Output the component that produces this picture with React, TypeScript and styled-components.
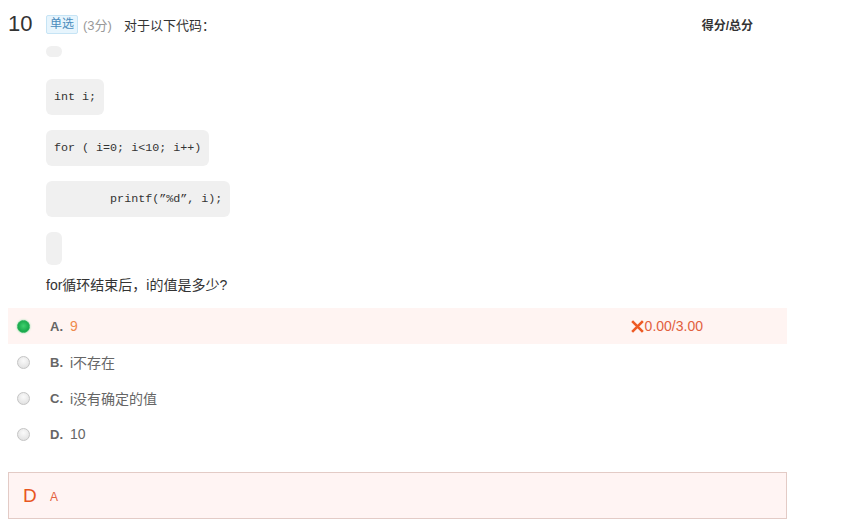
import React from "react"
import styled, { createGlobalStyle } from "styled-components"

const Global = createGlobalStyle`
  body {
    margin: 0;
    background: #fff;
    font-family: "Liberation Sans", "Noto Sans CJK SC", sans-serif;
    color: #333;
  }
`

const codeLines = ["", "int i;", "for ( i=0; i<10; i++)", "        printf(\u201d%d\u201d, i);", ""]

const options = [
  { key: "A", text: "9", picked: true },
  { key: "B", text: "i不存在", picked: false },
  { key: "C", text: "i没有确定的值", picked: false },
  { key: "D", text: "10", picked: false },
]

const App = () => (
  <Page>
    <Global />
    <Header>
      <Num>10</Num>
      <Tag>单选</Tag>
      <Points>(3分)</Points>
      <Title>对于以下代码：</Title>
      <ScoreHead>得分/总分</ScoreHead>
    </Header>
    <Body>
      <Code>
        {codeLines.map((line, i) => (
          <CodeLine key={i} $first={i === 0} $empty={line === ""}>
            {line}
          </CodeLine>
        ))}
      </Code>
      <Question>for循环结束后，i的值是多少?</Question>
    </Body>
    <Options>
      {options.map((o) => (
        <Option key={o.key} $picked={o.picked}>
          <Radio $on={o.picked} />
          <Letter>{o.key}.</Letter>
          <OptText $picked={o.picked}>{o.text}</OptText>
          {o.picked && (
            <Result>
              <Cross viewBox="0 0 14 14">
                <path d="M2 2 L12 12 M12 2 L2 12" />
              </Cross>
              0.00/3.00
            </Result>
          )}
        </Option>
      ))}
    </Options>
    <Answer>
      <AnswerMark>D</AnswerMark>
      <AnswerText>A</AnswerText>
    </Answer>
  </Page>
)

const Page = styled.div`
  width: 841px;
  padding-top: 12px;
`

const Header = styled.div`
  display: flex;
  align-items: center;
  height: 24px;
  padding-left: 8px;
  width: 745px;
`

const Num = styled.span`
  font-size: 22px;
  color: #333;
  width: 38px;
`

const Tag = styled.span`
  font-size: 12px;
  line-height: 17px;
  padding: 0 3px;
  background: #e7f5fd;
  border: 1px solid #c6e4f5;
  color: #4a8cbc;
  border-radius: 2px;
`

const Points = styled.span`
  font-size: 13px;
  color: #999;
  margin-left: 5px;
`

const Title = styled.span`
  font-size: 13px;
  color: #333;
  margin-left: 12px;
`

const ScoreHead = styled.span`
  margin-left: auto;
  font-size: 12px;
  font-weight: bold;
  color: #333;
`

const Body = styled.div`
  padding-left: 46px;
`

const Code = styled.div`
  display: flex;
  flex-direction: column;
  align-items: flex-start;
  gap: 15px;
`

const CodeLine = styled.pre<{ $first: boolean; $empty: boolean }>`
  margin: ${(p) => (p.$first ? "10px 0 7px" : "0")};
  background: #f0f0f0;
  border-radius: 6px;
  font-family: "Liberation Mono", monospace;
  font-size: 11.7px;
  color: #333;
  line-height: 36px;
  height: ${(p) => (p.$first ? "11px" : p.$empty ? "33px" : "36px")};
  min-width: 16px;
  padding: 0 ${(p) => (p.$empty ? "0" : "8px")};
`

const Question = styled.div`
  font-size: 14px;
  color: #333;
  margin-top: 10px;
  line-height: 20px;
`

const Options = styled.div`
  margin: 13px 0 0 8px;
  width: 779px;
`

const Option = styled.div<{ $picked: boolean }>`
  display: flex;
  align-items: center;
  height: 36px;
  padding-left: 9px;
  padding-right: 84px;
  background: ${(p) => (p.$picked ? "#fff4f2" : "transparent")};
`

const Radio = styled.span<{ $on: boolean }>`
  width: 13px;
  height: 13px;
  border-radius: 50%;
  box-sizing: border-box;
  border: 1px solid ${(p) => (p.$on ? "#2db55d" : "#c4c4c4")};
  background: ${(p) =>
    p.$on
      ? "radial-gradient(circle at 50% 45%, #3fd06e 0%, #17a74a 70%)"
      : "radial-gradient(circle at 50% 35%, #fafafa 0%, #e2e2e2 80%)"};
  box-shadow: ${(p) => (p.$on ? "0 0 2px #7fdc9d" : "none")};
`

const Letter = styled.span`
  margin-left: 20px;
  font-size: 13px;
  font-weight: bold;
  color: #666;
  width: 20px;
`

const OptText = styled.span<{ $picked: boolean }>`
  font-size: 14px;
  color: ${(p) => (p.$picked ? "#ef8a4c" : "#666")};
`

const Result = styled.span`
  margin-left: auto;
  display: flex;
  align-items: center;
  font-size: 14px;
  color: #e2603e;
`

const Cross = styled.svg`
  width: 15px;
  height: 15px;
  stroke: #ee5a24;
  stroke-width: 2.4;
  fill: none;
`

const Answer = styled.div`
  margin: 20px 0 0 8px;
  width: 779px;
  height: 47px;
  box-sizing: border-box;
  border: 1px solid #e3cbc6;
  background: #fff4f3;
  display: flex;
  align-items: center;
  padding-left: 14px;
`

const AnswerMark = styled.span`
  font-size: 19px;
  color: #e8561f;
  width: 27px;
`

const AnswerText = styled.span`
  font-size: 12px;
  color: #e2603e;
  margin-top: 3px;
`

export default App
